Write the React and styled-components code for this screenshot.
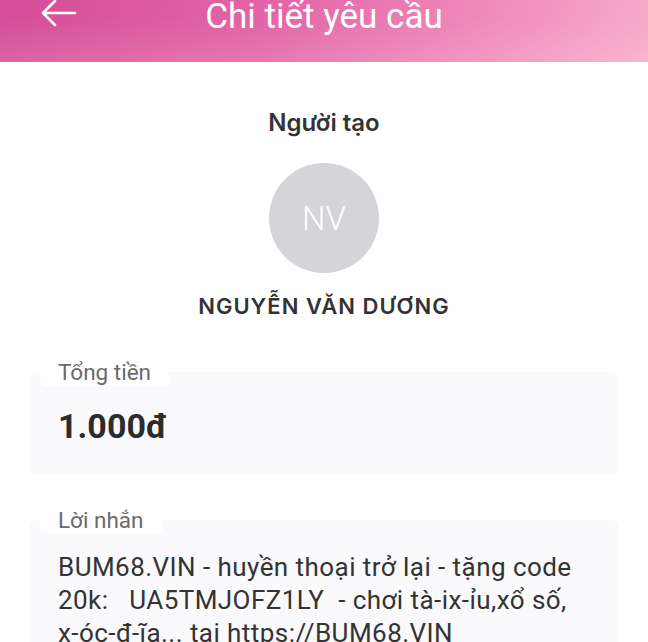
import styled, { createGlobalStyle } from "styled-components";

const GlobalStyle = createGlobalStyle`
    html, body {
        margin: 0;
        padding: 0;
        background: #ffffff;
        font-family: Roboto, "Liberation Sans", sans-serif;
        color: #333333;
    }
`;

const Page = styled.div`
    width: 648px;
    height: 642px;
    overflow: hidden;
    display: flex;
    flex-direction: column;
`;

const Header = styled.header`
    height: 62px;
    flex-shrink: 0;
    display: flex;
    align-items: flex-start;
    justify-content: center;
    position: relative;
    background:
        linear-gradient(180deg, rgba(255, 255, 255, 0) 30%, rgba(255, 255, 255, 0.12) 100%),
        linear-gradient(100deg, #d44d97 0%, #e264a6 40%, #f08bbb 75%, #f8aacc 100%);
`;

const BackButton = styled.button`
    position: absolute;
    left: 38px;
    top: -3px;
    width: 40px;
    height: 32px;
    padding: 0;
    border: 0;
    background: none;
    display: flex;
    align-items: center;
    justify-content: center;
`;

const Title = styled.h1`
    margin: -3px 0 0;
    font-family: Roboto, "Liberation Sans", sans-serif;
    font-weight: 400;
    font-size: 35px;
    line-height: 40px;
    color: #ffffff;
`;

const Content = styled.main`
    display: flex;
    flex-direction: column;
    align-items: center;
    padding-top: 47px;
`;

const Heading = styled.div`
    font-family: Inter, "Open Sans", sans-serif;
    font-weight: 600;
    font-size: ${(p) => p.$size}px;
    line-height: ${(p) => p.$line}px;
    color: #333333;
    letter-spacing: ${(p) => p.$spacing || 0}px;
`;

const Avatar = styled.div`
    width: 110px;
    height: 110px;
    margin: 26px 0 20px;
    border-radius: 50%;
    background: #d5d4d8;
    display: flex;
    align-items: center;
    justify-content: center;
    font-family: Roboto, sans-serif;
    font-weight: 300;
    font-size: 33px;
    color: #ffffff;
`;

const Section = styled.section`
    align-self: stretch;
    margin: ${(p) => p.$top}px 30px 0;
    display: flex;
    flex-direction: column;
`;

const FieldLabel = styled.div`
    align-self: flex-start;
    position: relative;
    z-index: 1;
    margin: 0 0 -14px 10px;
    padding: 0 18px;
    height: 28px;
    line-height: 28px;
    background: #ffffff;
    border-radius: 6px;
    font-size: 22.5px;
    font-weight: 400;
    color: #6a6a6e;
`;

const Card = styled.div`
    background: #faf9fc;
    border-radius: 8px;
    padding: ${(p) => p.$pad};
`;

const Amount = styled.div`
    font-family: Roboto, sans-serif;
    font-weight: 700;
    font-size: 34px;
    line-height: 40px;
    color: #2c2c2e;
`;

const Message = styled.p`
    margin: 0;
    font-size: 26px;
    line-height: 33px;
    letter-spacing: 0.45px;
    color: #333333;
    white-space: pre-wrap;
`;

const ArrowIcon = () => (
    <svg width="38" height="30" viewBox="0 0 38 30" fill="none">
        <path
            d="M36 15H4M16 3L4 15l12 12"
            stroke="#ffffff"
            strokeWidth="2.6"
            strokeLinecap="round"
            strokeLinejoin="round"
        />
    </svg>
);

const App = () => {
    return (
        <Page>
            <GlobalStyle />
            <Header>
                <BackButton aria-label="Quay lại">
                    <ArrowIcon />
                </BackButton>
                <Title>Chi tiết yêu cầu</Title>
            </Header>
            <Content>
                <Heading $size={24} $line={28}>Người tạo</Heading>
                <Avatar>NV</Avatar>
                <Heading $size={22} $line={26} $spacing={1}>NGUYỄN VĂN DƯƠNG</Heading>
                <Section $top={39}>
                    <FieldLabel>Tổng tiền</FieldLabel>
                    <Card $pad="34px 28px 29px">
                        <Amount>1.000đ</Amount>
                    </Card>
                </Section>
                <Section $top={31}>
                    <FieldLabel>Lời nhắn</FieldLabel>
                    <Card $pad="31px 28px 30px">
                        <Message>{"BUM68.VIN - huyền thoại trở lại - tặng code 20k:   UA5TMJOFZ1LY  - chơi tà-ix-ỉu,xổ số, x-óc-đ-ĩa... tại https://BUM68.VIN"}</Message>
                    </Card>
                </Section>
            </Content>
        </Page>
    );
};

export default App;
